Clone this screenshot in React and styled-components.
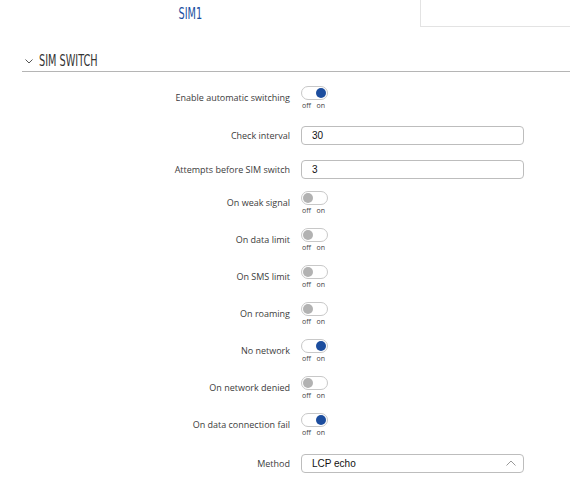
import React from "react";
import styled, { createGlobalStyle } from "styled-components";

const Global = createGlobalStyle`
  body {
    margin: 0;
    background: #fff;
    font-family: "Open Sans", "Noto Sans", sans-serif;
  }
`;

const rows = [
  { label: "Enable automatic switching", type: "toggle", on: true },
  { label: "Check interval", type: "input", value: "30" },
  { label: "Attempts before SIM switch", type: "input", value: "3" },
  { label: "On weak signal", type: "toggle", on: false },
  { label: "On data limit", type: "toggle", on: false },
  { label: "On SMS limit", type: "toggle", on: false },
  { label: "On roaming", type: "toggle", on: false },
  { label: "No network", type: "toggle", on: true },
  { label: "On network denied", type: "toggle", on: false },
  { label: "On data connection fail", type: "toggle", on: true },
  { label: "Method", type: "select", value: "LCP echo" },
];

function App() {
  return (
    <Page>
      <Global />
      <Tabs>
        <Tab active>
          <Condensed>SIM1</Condensed>
        </Tab>
        <Tab />
      </Tabs>
      <Section>
        <SectionHead>
          <svg width="8" height="5" viewBox="0 0 8 5">
            <path d="M0.5 0.5 L4 4 L7.5 0.5" fill="none" stroke="#555" strokeWidth="1" />
          </svg>
          <Title>
            <Condensed>SIM SWITCH</Condensed>
          </Title>
        </SectionHead>
        <Form>
          {rows.map((r) => (
            <Row key={r.label} kind={r.type}>
              <Label>{r.label}</Label>
              {r.type === "toggle" && (
                <ToggleWrap>
                  <Track>
                    <Knob on={r.on} />
                  </Track>
                  <OffOn>
                    <span>off</span>
                    <span>on</span>
                  </OffOn>
                </ToggleWrap>
              )}
              {r.type === "input" && <Field>{r.value}</Field>}
              {r.type === "select" && (
                <Field>
                  {r.value}
                  <svg width="10" height="6" viewBox="0 0 10 6">
                    <path d="M0.5 5.5 L5 1 L9.5 5.5" fill="none" stroke="#999" strokeWidth="1" />
                  </svg>
                </Field>
              )}
            </Row>
          ))}
        </Form>
      </Section>
    </Page>
  );
}

const Page = styled.div`
  width: 570px;
  height: 500px;
  overflow: hidden;
`;

const Tabs = styled.div`
  display: flex;
  height: 27px;
`;

const Tab = styled.div`
  box-sizing: border-box;
  display: flex;
  align-items: center;
  justify-content: center;
  font-family: "DejaVu Sans Condensed", "DejaVu Sans", sans-serif;
  font-size: 15px;
  color: #1b4f9f;
  ${(p) =>
    p.active
      ? `width: 380px; margin-right: 40px;`
      : `flex: 1; border-left: 1px solid #e3e3e3; border-bottom: 1px solid #e3e3e3;`}
`;

// no narrow face installed, so squeeze the condensed one a bit more
const Condensed = styled.span`
  display: inline-block;
  transform: scaleX(0.72);
  transform-origin: center;
`;

const Section = styled.div`
  padding-left: 22px;
`;

const SectionHead = styled.div`
  display: flex;
  align-items: center;
  gap: 6px;
  height: 45px;
  box-sizing: border-box;
  padding: 23px 0 0 3px;
  border-bottom: 1px solid #b5b5b5;
  svg {
    margin-top: 1px;
  }
`;

const Title = styled.div`
  font-family: "DejaVu Sans Condensed", "DejaVu Sans", sans-serif;
  font-size: 15px;
  color: #333;
  span {
    transform-origin: left center;
  }
`;

const Form = styled.div`
  display: flex;
  flex-direction: column;
  padding-top: 7px;
  margin-left: -22px;
`;

const Row = styled.div`
  box-sizing: border-box;
  display: grid;
  grid-template-columns: 290px 223px;
  column-gap: 11px;
  align-items: center;
  height: ${(p) => (p.kind === "toggle" ? "37px" : "34px")};
  padding-top: ${(p) => (p.kind === "input" ? "4px" : "0")};
  margin-top: ${(p) => (p.kind === "select" ? "3px" : "0")};
`;

const Label = styled.div`
  text-align: right;
  font-size: 9px;
  color: #3c3c3c;
`;

const ToggleWrap = styled.div`
  display: flex;
  flex-direction: column;
  width: 27px;
`;

const Track = styled.div`
  box-sizing: border-box;
  width: 27px;
  height: 14px;
  border: 1px solid #c8c8c8;
  border-radius: 7px;
  background: #fff;
  display: flex;
  align-items: center;
  padding: 0 1px;
`;

const Knob = styled.div`
  width: 10px;
  height: 10px;
  border-radius: 50%;
  background: ${(p) => (p.on ? "#1c4d9e" : "#b2b2b2")};
  margin-left: ${(p) => (p.on ? "auto" : "0")};
`;

const OffOn = styled.div`
  display: flex;
  justify-content: space-between;
  padding: 1px 3px 0 1px;
  font-size: 7px;
  line-height: 9px;
  color: #444;
`;

const Field = styled.div`
  box-sizing: border-box;
  height: 19px;
  border: 1px solid #bdbdbd;
  border-radius: 4px;
  display: flex;
  align-items: center;
  justify-content: space-between;
  padding: 0 7px 0 10px;
  font-family: "Liberation Sans", Arial, sans-serif;
  font-size: 10px;
  color: #111;
`;

export default App;
